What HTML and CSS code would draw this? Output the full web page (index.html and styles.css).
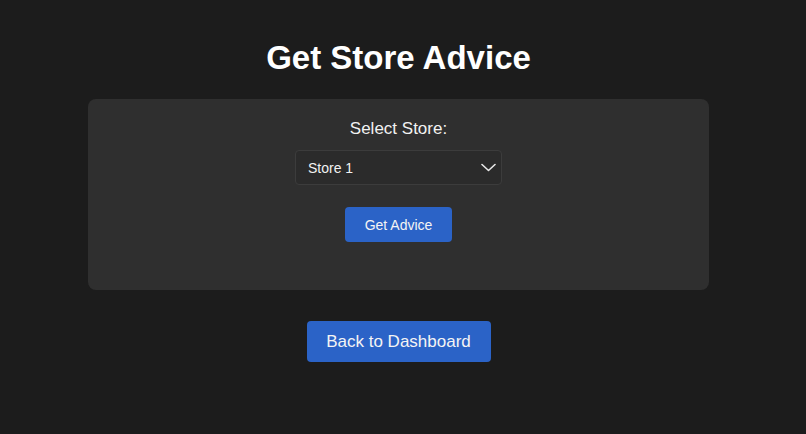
FILE: index.html
```html
<!DOCTYPE html>
<html>
<head>
<meta charset="utf-8">
<link rel="stylesheet" href="styles.css">
</head>
<body>
<div class="page">
  <h1 class="title">Get Store Advice</h1>
  <div class="card">
    <label class="label">Select Store:</label>
    <div class="select">
      <span class="select-text">Store 1</span>
      <svg class="chevron" width="15" height="9" viewBox="0 0 15 9"><path d="M1 1.5 L7.5 7.5 L14 1.5" fill="none" stroke="#e8e8e8" stroke-width="1.6" stroke-linecap="round" stroke-linejoin="round"/></svg>
    </div>
    <button class="btn btn-small">Get Advice</button>
  </div>
  <button class="btn btn-large">Back to Dashboard</button>
</div>
</body>
</html>
```
FILE: styles.css
```css
html, body {
  margin: 0;
  padding: 0;
  background: #1c1c1c;
  font-family: "Liberation Sans", Arial, sans-serif;
  color: #fff;
}
.page {
  width: 797px;
  display: flex;
  flex-direction: column;
  align-items: center;
  padding-top: 38px;
}
.title {
  margin: 0;
  font-size: 33px;
  font-weight: bold;
  line-height: 40px;
}
.card {
  margin-top: 21px;
  width: 621px;
  height: 191px;
  box-sizing: border-box;
  background: #2f2f2f;
  border-radius: 8px;
  display: flex;
  flex-direction: column;
  align-items: center;
  padding-top: 20px;
}
.label {
  font-size: 17px;
  line-height: 20px;
  color: #f2f2f2;
}
.select {
  margin-top: 11px;
  width: 207px;
  height: 35px;
  box-sizing: border-box;
  background: #2b2b2b;
  border: 1px solid #3c3c3c;
  border-radius: 4px;
  display: flex;
  align-items: center;
  justify-content: space-between;
  padding: 0 5px 0 12px;
}
.select-text {
  font-size: 14px;
  color: #f2f2f2;
}
.btn {
  background: #2b63c7;
  color: #f4f4f4;
  border: none;
  font-family: "Liberation Sans", Arial, sans-serif;
  border-radius: 4px;
  padding: 0;
}
.btn-small {
  margin-top: 22px;
  width: 107px;
  height: 35px;
  font-size: 14px;
}
.btn-large {
  margin-top: 31px;
  width: 184px;
  height: 41px;
  font-size: 17px;
}
```
